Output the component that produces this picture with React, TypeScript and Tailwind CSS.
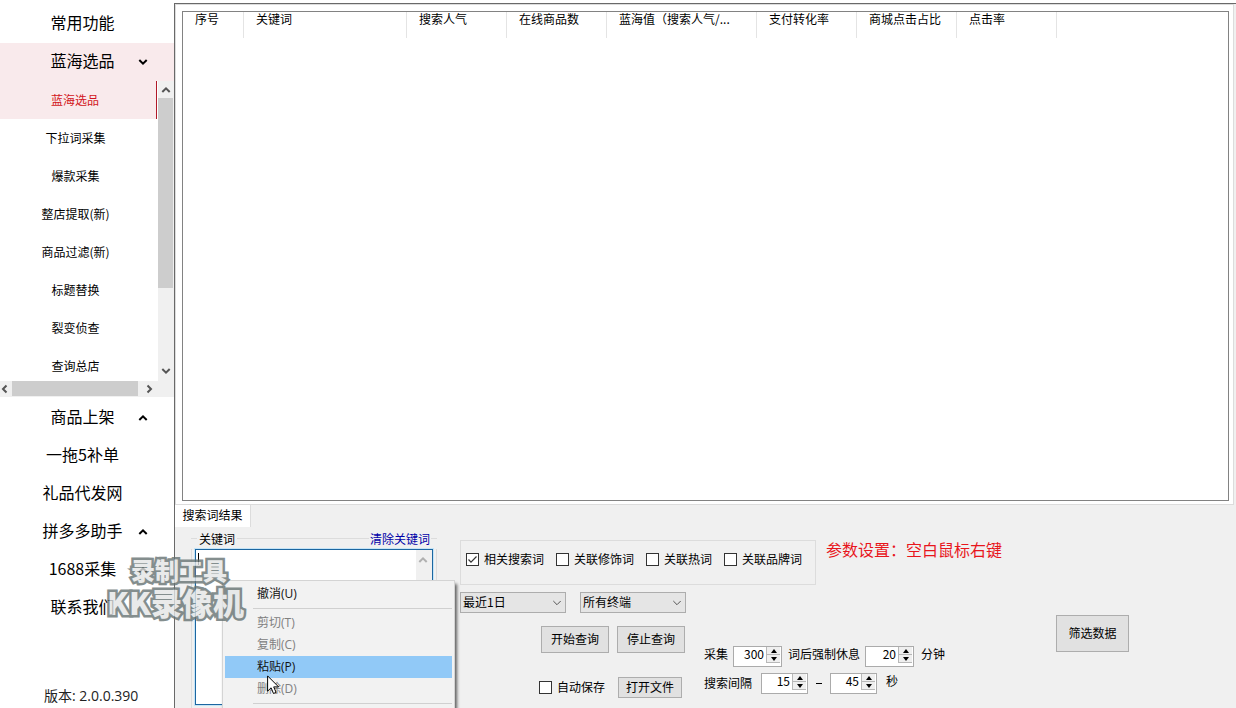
import type { ReactNode } from "react";

type Direction = "up" | "down" | "left" | "right";

const chevronPaths: Record<Direction, string> = {
  up: "M1.3 7 5 3.3 8.7 7",
  down: "M1.3 3 5 6.7 8.7 3",
  left: "M6.5 1.5 3 5l3.5 3.5",
  right: "M3.5 1.5 7 5 3.5 8.5",
};

function Chevron({ dir, className = "" }: { dir: Direction; className?: string }) {
  return (
    <svg viewBox="0 0 10 10" className={`pointer-events-none size-[10px] fill-none stroke-current ${className}`} aria-hidden="true">
      <path d={chevronPaths[dir]} />
    </svg>
  );
}

function MenuRow({ label, arrow, active }: { label: string; arrow?: Direction; active?: boolean }) {
  return (
    <button
      type="button"
      className={`grid h-[38px] w-full shrink-0 grid-cols-[28px_109px_1fr] items-center text-base whitespace-nowrap ${active ? "bg-[#f9eaec]" : ""}`}
    >
      <span className="col-start-2 pb-[5px] text-center">{label}</span>
      {arrow && <Chevron dir={arrow} className="ml-px stroke-2" />}
    </button>
  );
}

const subItems = ["蓝海选品", "下拉词采集", "爆款采集", "整店提取(新)", "商品过滤(新)", "标题替换", "裂变侦查", "查询总店"];

function Sidebar() {
  return (
    <nav className="flex w-[174px] shrink-0 flex-col bg-white pt-[5px]">
      <MenuRow label="常用功能" />
      <MenuRow label="蓝海选品" arrow="down" active />
      <div className="flex h-[300px] shrink-0">
        <ul className="min-w-0 flex-1 overflow-hidden">
          {subItems.map((item, i) => (
            <li key={item}>
              <button
                type="button"
                className={`h-[38px] w-[157px] pr-[6px] text-center ${i === 0 ? "border-r border-[#b01828] bg-[#f9eaec] text-[#d21420]" : ""}`}
              >
                {item}
              </button>
            </li>
          ))}
        </ul>
        <div className="flex w-4 shrink-0 flex-col items-center bg-[#f0f0f0] pr-px text-[#555]">
          <div className="flex h-[17px] items-center">
            <Chevron dir="up" className="stroke-2" />
          </div>
          <div className="h-[190px] w-full bg-[#cdcdcd]" />
          <div className="mt-auto flex h-[20px] items-center">
            <Chevron dir="down" className="stroke-2" />
          </div>
        </div>
      </div>
      <div className="flex h-4 shrink-0 items-center bg-[#f0f0f0] pb-px text-[#555]">
        <Chevron dir="left" className="mr-[2px] stroke-2" />
        <div className="h-[15px] w-[126px] bg-[#cdcdcd]" />
        <Chevron dir="right" className="ml-[6px] stroke-2" />
      </div>
      <div className="pt-[2px]">
        <MenuRow label="商品上架" arrow="up" />
        <MenuRow label="一拖5补单" />
        <MenuRow label="礼品代发网" />
        <MenuRow label="拼多多助手" arrow="up" />
        <MenuRow label="1688采集" arrow="up" />
        <MenuRow label="联系我们" />
      </div>
      <p className="mt-auto pb-[2px] pl-[44px] font-['Open_Sans','Noto_Sans_CJK_SC',sans-serif] text-sm whitespace-nowrap text-[#222]">
        版本: 2.0.0.390
      </p>
    </nav>
  );
}

function ResultTable() {
  const th = "overflow-hidden border-r border-[#e4e4e4] pl-3 text-left align-top font-normal whitespace-nowrap";
  return (
    <div className="min-h-0 flex-1 overflow-hidden border border-[#828282] bg-white">
      <table className="table-fixed border-separate border-spacing-0 leading-[14px]">
        <thead>
          <tr className="h-[26px]">
            <th className={`w-[61px] ${th}`}>序号</th>
            <th className={`w-[163px] ${th}`}>关键词</th>
            <th className={`w-[100px] ${th}`}>搜索人气</th>
            <th className={`w-[100px] ${th}`}>在线商品数</th>
            <th className={`w-[150px] ${th}`}>蓝海值（搜索人气/...</th>
            <th className={`w-[100px] ${th}`}>支付转化率</th>
            <th className={`w-[100px] ${th}`}>商城点击占比</th>
            <th className={`w-[100px] ${th}`}>点击率</th>
          </tr>
        </thead>
        <tbody />
      </table>
    </div>
  );
}

function KeywordBox() {
  return (
    <div className="ml-4 w-[246px] shrink-0">
      <div className="flex h-[18px] items-center pb-[3px]">
        <i className="h-px w-[6px] bg-[#dcdcdc]" />
        <label htmlFor="keywords" className="px-[2px]">关键词</label>
        <i className="h-px flex-1 bg-[#dcdcdc]" />
        <a href="#clear" className="px-px text-[#0000a8]">清除关键词</a>
        <i className="h-px w-[6px] bg-[#dcdcdc]" />
      </div>
      <div className="border-x border-[#dcdcdc] px-[3px] pb-[3px]">
        <div className="relative flex h-[156px] border border-[#1c66a0] bg-white ring-1 ring-[#c5e4f7]">
          <textarea id="keywords" className="min-w-0 flex-1 resize-none p-[2px] outline-none" />
          <div className="w-4 bg-[#f0f0f0] pt-[5px] pl-[2px] text-[#b0b0b0]">
            <Chevron dir="up" className="stroke-2" />
          </div>
          <i className="absolute top-[3px] left-[2px] h-3 w-px bg-black" />
        </div>
      </div>
    </div>
  );
}

function Check({ label, checked }: { label: string; checked?: boolean }) {
  return (
    <label className="flex items-center gap-[5px] whitespace-nowrap">
      <span className="grid size-[13px] items-center">
        <input type="checkbox" defaultChecked={checked} className="peer col-start-1 row-start-1 size-[13px] appearance-none border border-[#333] bg-white" />
        <svg viewBox="0 0 13 13" className="pointer-events-none invisible col-start-1 row-start-1 size-[13px] fill-none stroke-[#333] peer-checked:visible" aria-hidden="true">
          <path d="M2.5 6.5 5 9.2l5.5-5.7" strokeWidth="1.2" />
        </svg>
      </span>
      <span className="pb-px">{label}</span>
    </label>
  );
}

function Select({ label, value }: { label: string; value: string }) {
  return (
    <div className="grid w-[106px] items-center">
      <select aria-label={label} className="col-start-1 row-start-1 h-[21px] w-full appearance-none border border-[#adadad] bg-[#e5e5e5] pb-px pl-[2px] leading-4">
        <option>{value}</option>
      </select>
      <Chevron dir="down" className="col-start-1 row-start-1 mr-[4px] justify-self-end text-[#555]" />
    </div>
  );
}

function Btn({ children, className }: { children: ReactNode; className: string }) {
  return (
    <button type="button" className={`border border-[#adadad] bg-[#e1e1e1] pb-px whitespace-nowrap ${className}`}>
      {children}
    </button>
  );
}

function Spinner({ label, value, narrow }: { label: string; value: string; narrow?: boolean }) {
  const step = "flex h-[8px] items-center justify-center border border-t-0 border-r-0 border-[#b8b8b8] bg-[#efefef]";
  return (
    <span className={`flex h-[21px] border border-[#ababab] bg-white pr-px pb-[2px] ${narrow ? "w-[47px]" : "w-[49px]"}`}>
      <input aria-label={label} defaultValue={value} className="min-w-0 flex-1 bg-transparent pr-[2px] pb-[3px] text-right outline-none" />
      <span className="flex w-[14px] flex-col">
        <button type="button" aria-label={`${label} +`} className={step}>
          <svg viewBox="0 0 6 4" className="h-[4px] w-[6px]"><path d="M0 4 3 0l3 4z" /></svg>
        </button>
        <button type="button" aria-label={`${label} -`} className={step}>
          <svg viewBox="0 0 6 4" className="h-[4px] w-[6px]"><path d="M0 0h6L3 4z" /></svg>
        </button>
      </span>
    </span>
  );
}

function Controls() {
  return (
    <div className="ml-[23px] min-w-0 flex-1 pt-[9px]">
      <div className="flex gap-[10px]">
        <div className="flex h-[45px] w-[356px] shrink-0 gap-3 border border-[#dcdcdc] px-[5px] pb-[6px]">
          <Check label="相关搜索词" checked />
          <Check label="关联修饰词" />
          <Check label="关联热词" />
          <Check label="关联品牌词" />
        </div>
        <p className="text-base leading-[18px] text-[#e8161c]">参数设置：空白鼠标右键</p>
      </div>
      <div className="flex pt-[7px]">
        <div className="w-[226px] shrink-0">
          <div className="flex justify-between">
            <Select label="时间范围" value="最近1日" />
            <Select label="终端" value="所有终端" />
          </div>
          <div className="flex justify-end gap-2 pt-[13px] pr-px">
            <Btn className="h-[27px] w-[68px]">开始查询</Btn>
            <Btn className="h-[27px] w-[68px]">停止查询</Btn>
          </div>
          <div className="flex justify-end gap-[13px] pt-6 pr-[4px]">
            <Check label="自动保存" />
            <Btn className="h-[21px] w-[64px]">打开文件</Btn>
          </div>
        </div>
        <div className="ml-[18px] flex w-[352px] shrink-0 flex-col gap-[6px] pt-[54px]">
          <div className="flex items-center gap-[5px]">
            <span className="pb-[5px]">采集</span>
            <Spinner label="采集词数" value="300" />
            <span className="pb-[5px] pl-px">词后强制休息</span>
            <Spinner label="休息分钟" value="20" />
            <span className="pb-[5px] pl-[2px]">分钟</span>
          </div>
          <div className="flex items-center gap-[9px]">
            <span className="pb-px">搜索间隔</span>
            <Spinner label="最小间隔" value="15" narrow />
            <i className="-mx-px mb-px h-px w-[6px] bg-black" />
            <Spinner label="最大间隔" value="45" narrow />
            <span className="pb-[5px]">秒</span>
          </div>
        </div>
        <Btn className="mt-[23px] h-[37px] w-[73px]">筛选数据</Btn>
      </div>
    </div>
  );
}

function MenuItem({ label, state = "normal" }: { label: string; state?: "normal" | "disabled" | "hover" }) {
  const look = { normal: "text-[#111]", disabled: "text-[#808080]", hover: "bg-[#91c9f7] text-[#111]" }[state];
  return (
    <button type="button" role="menuitem" disabled={state === "disabled"} className={`block h-[22px] w-full pl-8 text-left ${look}`}>
      {label}
    </button>
  );
}

function ContextMenu() {
  const line = "my-[3px] ml-7 h-px bg-[#d0d0d0]";
  return (
    <div
      role="menu"
      className="absolute top-[580px] left-[222px] w-[233px] border border-[#d4d4d4] bg-[#f2f2f2] p-[2px] pb-6 font-['Open_Sans','Noto_Sans_CJK_SC',sans-serif] shadow-[2px_4px_3px_rgba(0,0,0,0.6)]"
    >
      <MenuItem label="撤消(U)" />
      <div className={line} />
      <MenuItem label="剪切(T)" state="disabled" />
      <MenuItem label="复制(C)" state="disabled" />
      <MenuItem label="粘贴(P)" state="hover" />
      <MenuItem label="删除(D)" state="disabled" />
      <div className={line} />
    </div>
  );
}

function Watermark() {
  return (
    <div className="pointer-events-none absolute top-[554px] left-[107px] font-black whitespace-nowrap text-[#e4e6e6] opacity-80 [-webkit-text-stroke:5px_#667272] [paint-order:stroke_fill] [stroke-linejoin:round]">
      <p className="pl-[24px] text-2xl leading-8">录制工具</p>
      <p className="text-[31px] leading-8">KK录像机</p>
    </div>
  );
}

export default function App() {
  return (
    <div className="relative flex h-screen overflow-hidden bg-white font-['Noto_Sans_CJK_SC',sans-serif] text-xs text-black">
      <Sidebar />
      <main className="mt-[3px] flex min-w-0 flex-1 flex-col border-t border-l border-[#696969] bg-[#f0f0f0]">
        <section className="mr-[2px] flex min-h-0 flex-1 flex-col border border-[#dcdcdc] bg-white pt-[6px] pr-[4px] pb-[3px] pl-[6px]">
          <ResultTable />
        </section>
        <section className="shrink-0">
          <button type="button" className="block h-[22px] w-[76px] border-r border-[#dcdcdc] bg-white pb-[2px] text-center">搜索词结果</button>
          <div className="flex pt-[4px]">
            <KeywordBox />
            <Controls />
          </div>
        </section>
      </main>
      <ContextMenu />
      <svg viewBox="0 0 13 20" className="pointer-events-none absolute top-[675px] left-[267px] h-5 w-[13px]" aria-hidden="true">
        <path d="M.6.9v15.3l3.5-3.4 2.4 5.7 2.6-1.1-2.4-5.5h4.9z" fill="white" stroke="black" />
      </svg>
      <Watermark />
    </div>
  );
}
